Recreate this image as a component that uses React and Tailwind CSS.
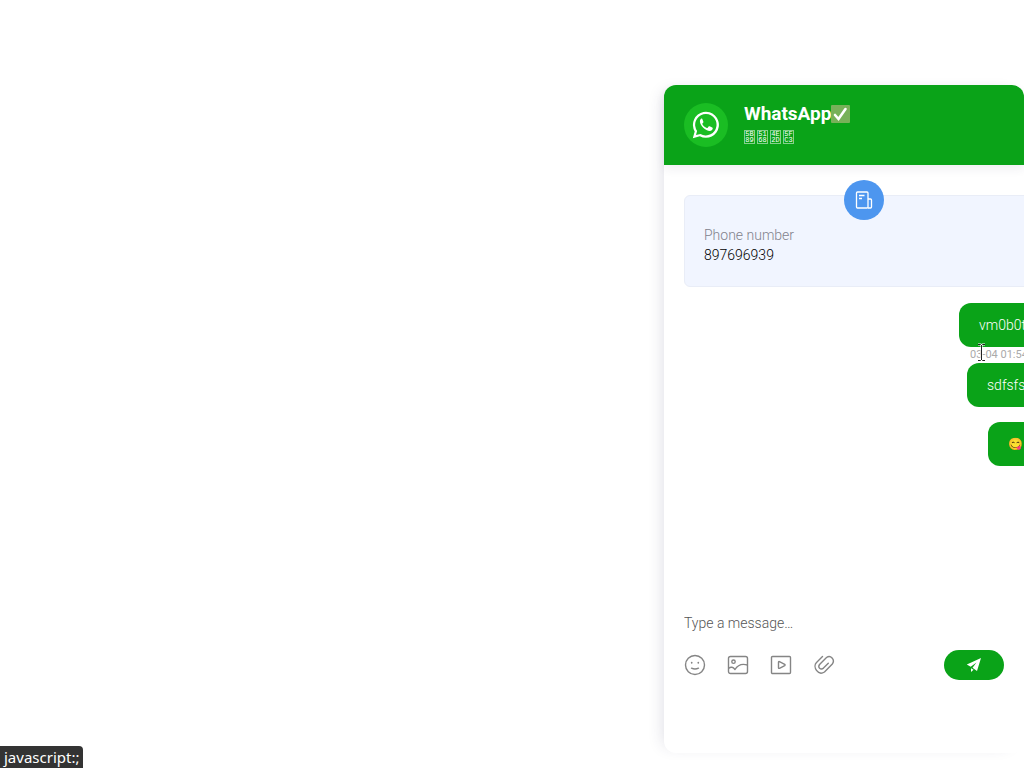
import { useState } from 'react'

const subtitle = [
  ['5B', '89'],
  ['51', '68'],
  ['4E', '2D'],
  ['5F', 'C3'],
]

const messages = [
  { id: 1, text: 'vm0b0t', time: '03-04 01:54', width: 'w-[85px]', size: 'text-sm' },
  { id: 2, text: 'sdfsfs', width: 'w-[77px]', size: 'text-sm' },
  { id: 3, text: '😋', width: 'w-14', size: 'text-xs' },
]

const WhatsAppIcon = () => (
  <svg width="28" height="28" viewBox="0 0 28 28" fill="none" aria-hidden="true">
    <path d="M.8 27.2l1.9-6.8A13 13 0 1 1 7.8 25.3z" fill="#fff" />
    <path d="M4 24l1.1-4.1A10.700 10.700 0 1 1 8.500 23z" fill="#1abd23" />
    <path
      d="M9.600 7.500c-.8.2-1.700 1.300-1.700 2.700 0 4.300 5.700 9.700 9.900 9.700 1.500 0 2.800-1 2.900-2.200.1-.7 0-.9-.5-1.200l-2.600-1.200c-.5-.2-.7 0-1 .3l-.9 1.200c-.2.3-.5.3-.9.2-2-.8-3.400-2.100-4.400-3.800-.2-.4-.1-.6.2-.9.9-1 1-1.100.7-1.800l-1-2.400c-.2-.5-.4-.6-.7-.6z"
      fill="#fff"
    />
  </svg>
)

const CheckIcon = () => (
  <svg width="19" height="18" viewBox="0 0 19 18" role="img" aria-label="check">
    <rect width="19" height="18" rx="1" fill="#78b159" />
    <path d="M4 10l3.500 4L14.500 4" fill="none" stroke="#fff" strokeWidth="2.600" strokeLinecap="round" />
  </svg>
)

const DocIcon = () => (
  <svg width="18" height="18" viewBox="0 0 18 18" fill="none" stroke="#fff" strokeWidth="1.300" strokeLinejoin="round" aria-hidden="true">
    <rect x="1.500" y="1" width="11.500" height="16" rx="1" />
    <path d="M13 8h2.500q1 0 1 1v7q0 1-1 1H13M4 4.500h5.500M4 7.500h3" />
  </svg>
)

const SmileIcon = () => (
  <svg width="22" height="22" viewBox="0 0 22 22" fill="none" stroke="currentColor" strokeWidth="1.400" strokeLinecap="round" aria-hidden="true">
    <circle cx="11" cy="11" r="9.500" />
    <path d="M7.500 14.200c2 .9 5 .9 7 0" />
    <path d="M7.700 8.500v.3M14.300 8.500v.3" strokeWidth="1.700" />
  </svg>
)

const ImageIcon = () => (
  <svg width="22" height="22" viewBox="0 0 22 22" fill="none" stroke="currentColor" strokeWidth="1.400" strokeLinejoin="round" aria-hidden="true">
    <rect x="1.500" y="2.500" width="19" height="17" rx="2" />
    <circle cx="6.500" cy="7.700" r="1.700" />
    <path d="M1.500 14.500c2.500-2 4.500-1.500 6.500 1 3-5 7.500-6 12.500-4.500" />
  </svg>
)

const VideoIcon = () => (
  <svg width="22" height="22" viewBox="0 0 22 22" fill="none" stroke="currentColor" strokeWidth="1.400" strokeLinejoin="round" aria-hidden="true">
    <rect x="1.500" y="2.500" width="19" height="17" rx="1" />
    <path d="M8.500 8.300q0-1 1-.7l5.200 2.700q.8.600 0 1.300l-5.200 2.700q-1 .4-1-.6z" />
  </svg>
)

const ClipIcon = () => (
  <svg width="22" height="22" viewBox="0 0 22 22" fill="none" stroke="currentColor" strokeWidth="1.400" strokeLinecap="round" aria-hidden="true">
    <path d="M9.500 2.500L3.500 8.500C-.7 12.700 5 22.200 11.500 18L19.300 10C22.500 5.500 17.500 .5 13.500 3.500L6.800 10.200c-2.600 3 .9 6.300 3.700 3.900L15.300 9.200" />
  </svg>
)

const SendIcon = () => (
  <svg width="16" height="16" viewBox="0 0 16 16" fill="#fff" aria-hidden="true">
    <path d="M15 1L.8 7.500l3.900 2.200L10.500 5.500 6.500 10.700 11 14z" />
    <path d="M5 11.200v3.800l2.500-2.200z" />
  </svg>
)

const tools = [
  { label: 'Emoji', icon: SmileIcon },
  { label: 'Image', icon: ImageIcon },
  { label: 'Video', icon: VideoIcon },
  { label: 'Attachment', icon: ClipIcon },
]

export default function App() {
  const [draft, setDraft] = useState('')

  return (
    <div className="relative min-h-screen overflow-hidden bg-white pt-[85px] font-['Roboto','Liberation_Sans',sans-serif]">
      <main className="ml-auto flex min-h-[668px] w-[360px] flex-col rounded-xl bg-white shadow-[-8px_0_16px_-8px_rgba(50,50,93,0.18)]">
        {/* Header */}
        <header className="flex h-20 items-center gap-4 rounded-t-xl bg-[#0aa318] px-5 text-white shadow-[0_4px_10px_rgba(50,50,93,0.08)]">
          <div className="flex size-11 shrink-0 items-center justify-center rounded-full bg-[#1abd23]">
            <WhatsAppIcon />
          </div>
          <div className="pb-1">
            <h1 className="flex items-center text-[19px] leading-6 font-bold">
              WhatsApp
              <CheckIcon />
            </h1>
            <p className="mt-1 flex gap-0.5 font-['Liberation_Mono',monospace] text-[7px] leading-[6px]">
              {subtitle.map(([top, bottom]) => (
                <span key={top} className="flex w-[11px] flex-col items-center border border-white/50">
                  <span>{top}</span>
                  <span>{bottom}</span>
                </span>
              ))}
            </p>
          </div>
        </header>

        {/* Conversation */}
        <section className="flex w-[380px] flex-1 flex-col pt-[30px] pl-5 text-sm font-light">
          <div className="relative h-[92px] rounded-md border border-[#e9edf7] bg-[#f1f5ff] px-[19px] pt-[29px] leading-5">
            <div className="absolute -top-4 left-1/2 flex size-10 -translate-x-1/2 items-center justify-center rounded-full bg-[#4d96ef]">
              <DocIcon />
            </div>
            <p className="text-[#82828c]">Phone number</p>
            <p className="text-black">897696939</p>
          </div>

          <ul className="mt-4 flex flex-col items-end">
            {messages.map(({ id, text, time, width, size }) => (
              <li key={id} className="flex flex-col items-end">
                <p className={`flex h-11 items-center rounded-xl bg-[#0aa318] px-5 text-white ${width} ${size}`}>{text}</p>
                {time ? (
                  <time className="h-4 w-[74px] text-[11px] leading-4 font-normal whitespace-nowrap text-[#aaa]">{time}</time>
                ) : (
                  <span className="h-[15px]" />
                )}
              </li>
            ))}
          </ul>
        </section>

        {/* Composer */}
        <form className="px-5 pb-[73px]" onSubmit={(e) => e.preventDefault()}>
          <input
            type="text"
            aria-label="Message"
            placeholder="Type a message…"
            value={draft}
            onChange={(e) => setDraft(e.target.value)}
            className="block h-6 w-full text-sm font-light outline-none placeholder:text-[#555]"
          />
          <div className="mt-[15px] flex items-center justify-between">
            <div className="flex gap-[21px] text-[#858585]">
              {tools.map(({ label, icon: Icon }) => (
                <button key={label} type="button" aria-label={label}>
                  <Icon />
                </button>
              ))}
            </div>
            <button type="submit" aria-label="Send" className="flex h-[30px] w-[60px] items-center justify-center rounded-full bg-[#0aa318]">
              <SendIcon />
            </button>
          </div>
        </form>
      </main>

      {/* Text cursor */}
      <svg className="absolute top-[343px] left-[977px]" width="9" height="19" viewBox="0 0 9 19" fill="none" aria-hidden="true">
        <path d="M1 1.500h2.500l1 1 1-1H8M4.500 2v15M1 17.500h2.500l1-1 1 1H8" stroke="#fff" strokeWidth="2" />
        <path d="M1 1.500h2.500l1 1 1-1H8M4.500 2v15M1 17.500h2.500l1-1 1 1H8" stroke="#222" />
      </svg>

      {/* Link status */}
      <div className="absolute bottom-0 left-0 h-[22px] rounded-tr-sm bg-[#333] px-1 font-['Noto_Sans',sans-serif] text-[15px] leading-[22px] text-white">
        javascript:;
      </div>
    </div>
  )
}
